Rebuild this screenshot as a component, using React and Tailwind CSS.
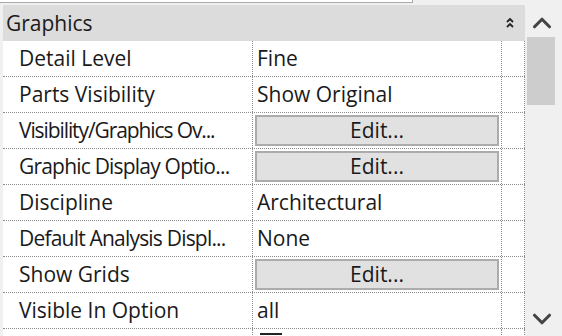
import { ChevronUp, ChevronDown } from 'lucide-react';

const rows = [
  { name: 'Detail Level', value: 'Fine' },
  { name: 'Parts Visibility', value: 'Show Original' },
  { name: 'Visibility/Graphics Ov...', edit: true, tight: 'tracking-[-1.1px]' },
  { name: 'Graphic Display Optio...', edit: true, tight: 'tracking-[-0.8px]' },
  { name: 'Discipline', value: 'Architectural' },
  { name: 'Default Analysis Displ...', value: 'None', tight: 'tracking-[-0.8px]' },
  { name: 'Show Grids', edit: true },
  { name: 'Visible In Option', value: 'all' },
];

function CollapseIcon() {
  return (
    <svg width="10" height="12" viewBox="0 0 10 12" fill="none" stroke="#222" strokeWidth="1.8">
      <path d="M2 5 L5 2 L8 5" />
      <path d="M2 10 L5 7 L8 10" />
    </svg>
  );
}

export default function App() {
  return (
    <div className="w-[562px] h-[336px] bg-[#f0f0f0] overflow-hidden flex text-[21px] leading-none text-[#1a1a1a] font-['Open_Sans','Noto_Sans',sans-serif]">
      {/* 属性表格 */}
      <div className="w-[525px] flex flex-col shrink-0">
        <div className="h-[3px] w-[413px] bg-white border-b border-r border-[#a9a9a9] shrink-0" />
        <div className="h-[2px] shrink-0" />
        <div className="ml-[3px] h-[36px] bg-[#dcdcdc] flex items-center justify-between pl-[3px] pr-[10px] shrink-0">
          <span>Graphics</span>
          <CollapseIcon />
        </div>
        <div className="ml-[3px] bg-white flex flex-col">
          {rows.map((r) => (
            <div key={r.name} className="h-[36px] flex border-b border-dotted border-[#8c8c8c] shrink-0">
              <div
                className={
                  'w-[250px] pl-[16px] flex items-center border-r border-dotted border-[#8c8c8c] whitespace-nowrap overflow-hidden ' +
                  (r.tight || '')
                }
              >
                {r.name}
              </div>
              <div className="w-[249px] flex items-center border-r border-dotted border-[#8c8c8c]">
                {r.edit ? (
                  <div className="mx-[2px] w-full h-[31px] bg-[#e1e1e1] border-2 border-[#acacac] flex items-center justify-center">
                    Edit...
                  </div>
                ) : (
                  <span className="pl-[4px]">{r.value}</span>
                )}
              </div>
              <div className="flex-1 border-r border-dotted border-[#8c8c8c]" />
            </div>
          ))}
          <div className="h-[20px] flex">
            <div className="w-[250px] border-r border-dotted border-[#8c8c8c]" />
            <div className="w-[249px] pl-[7px] pt-[4px] border-r border-dotted border-[#8c8c8c]">
              <div className="w-[22px] h-[2px] bg-[#222]" />
            </div>
            <div className="flex-1 border-r border-dotted border-[#8c8c8c]" />
          </div>
        </div>
      </div>
      {/* 滚动条 */}
      <div className="flex-1 flex flex-col items-center pt-[8px]">
        <ChevronUp className="w-[30px] h-[30px] text-[#444] ml-[-4px]" strokeWidth={2.5} />
        <div className="mt-[-1px] ml-[-6px] w-[28px] h-[68px] bg-[#cdcdcd]" />
        <div className="flex-1" />
        <ChevronDown className="w-[30px] h-[30px] text-[#444] mb-[2px] ml-[-4px]" strokeWidth={2.5} />
      </div>
    </div>
  );
}
